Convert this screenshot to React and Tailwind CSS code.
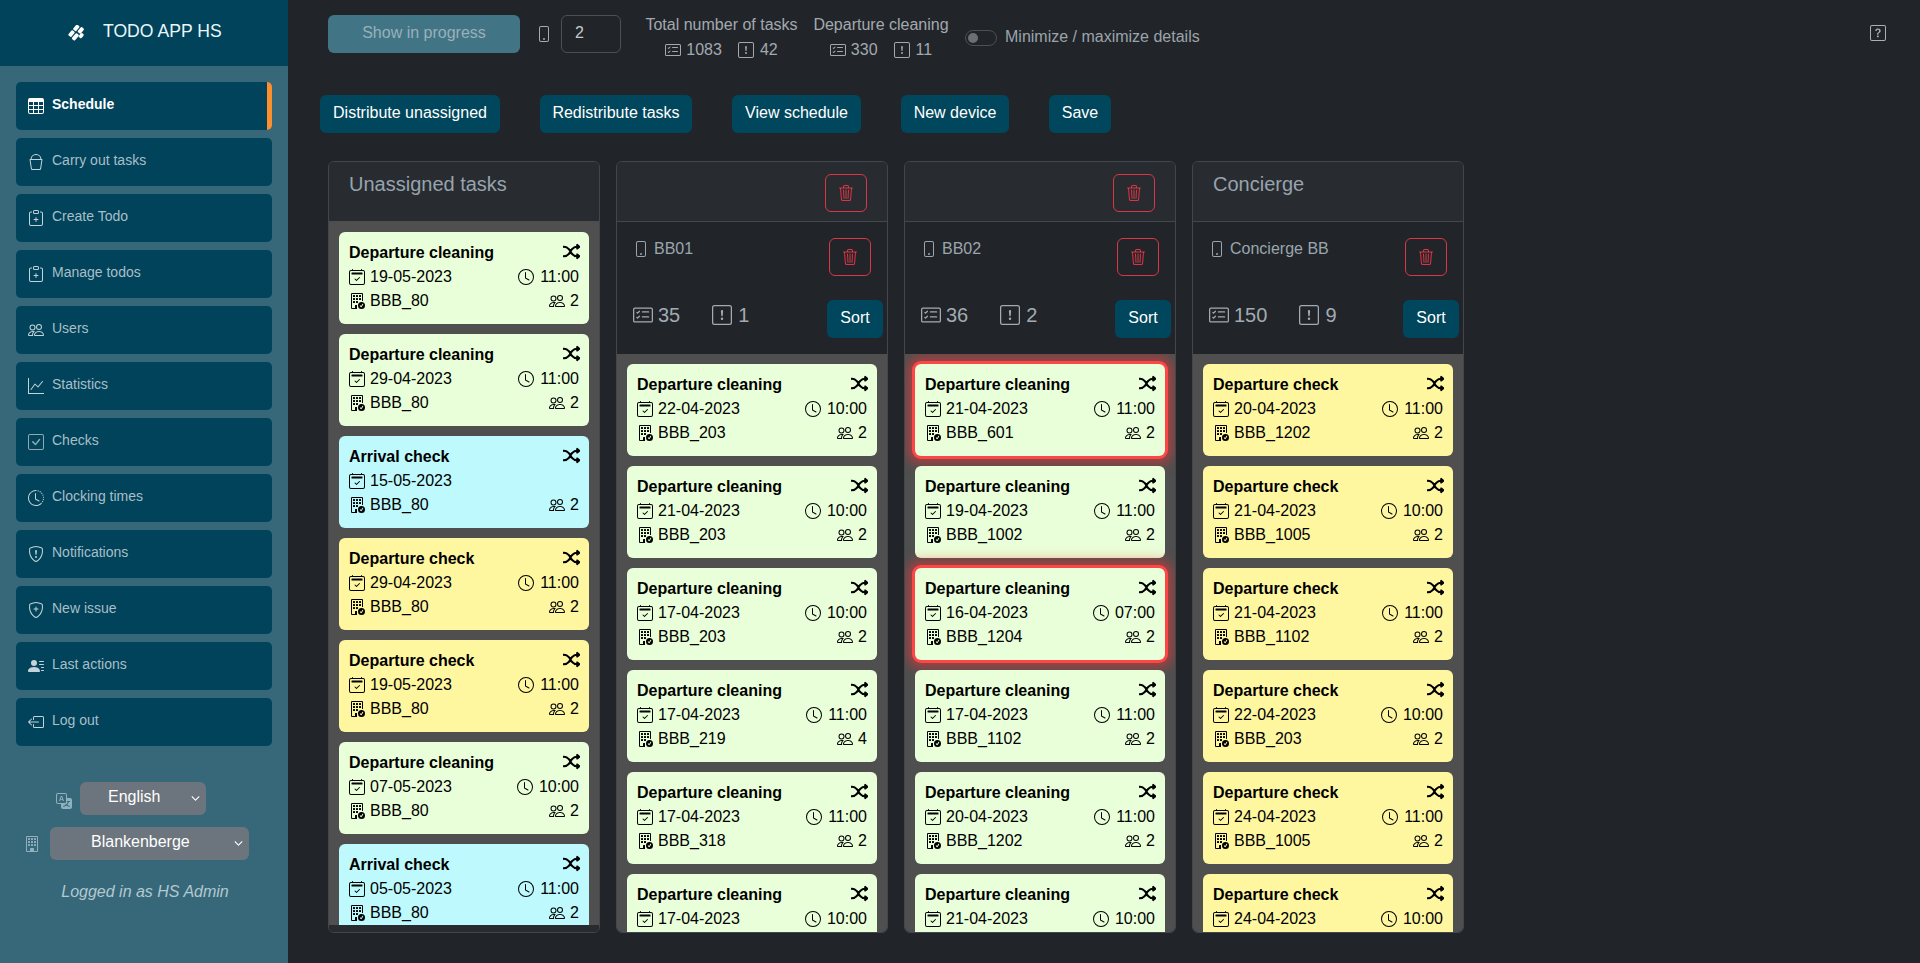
import React from 'react';
import {
  BsTable, BsBucket, BsClipboardPlus, BsPeople, BsGraphUp, BsCheckSquare, BsClockHistory,
  BsShieldExclamation, BsShieldPlus, BsPersonLinesFill, BsBoxArrowLeft, BsTranslate, BsBuilding,
  BsBuildingCheck, BsCalendar2Check, BsClock, BsShuffle, BsTrash3, BsPhone, BsCardChecklist,
  BsExclamationSquare, BsQuestionSquare, BsChevronDown,
} from 'react-icons/bs';

const nav = [
  ['Schedule', BsTable], ['Carry out tasks', BsBucket], ['Create Todo', BsClipboardPlus], ['Manage todos', BsClipboardPlus],
  ['Users', BsPeople], ['Statistics', BsGraphUp], ['Checks', BsCheckSquare], ['Clocking times', BsClockHistory],
  ['Notifications', BsShieldExclamation], ['New issue', BsShieldPlus], ['Last actions', BsPersonLinesFill], ['Log out', BsBoxArrowLeft],
];

const actions = [
  ['Distribute unassigned', 'w-[180px]'], ['Redistribute tasks', 'w-[152px]'], ['View schedule', 'w-[129px]'],
  ['New device', 'w-[108px]'], ['Save', 'w-[62px]'],
];

const DC = 'Departure cleaning';
const DK = 'Departure check';
const AC = 'Arrival check';

const unassigned = [
  [DC, '19-05-2023', '11:00', 'BBB_80', 2], [DC, '29-04-2023', '11:00', 'BBB_80', 2], [AC, '15-05-2023', '', 'BBB_80', 2],
  [DK, '29-04-2023', '11:00', 'BBB_80', 2], [DK, '19-05-2023', '11:00', 'BBB_80', 2], [DC, '07-05-2023', '10:00', 'BBB_80', 2],
  [AC, '05-05-2023', '11:00', 'BBB_80', 2],
];
const bb01 = [
  [DC, '22-04-2023', '10:00', 'BBB_203', 2], [DC, '21-04-2023', '10:00', 'BBB_203', 2], [DC, '17-04-2023', '10:00', 'BBB_203', 2],
  [DC, '17-04-2023', '11:00', 'BBB_219', 4], [DC, '17-04-2023', '11:00', 'BBB_318', 2], [DC, '17-04-2023', '10:00', 'BBB_203', 2],
];
const bb02 = [
  [DC, '21-04-2023', '11:00', 'BBB_601', 2, true], [DC, '19-04-2023', '11:00', 'BBB_1002', 2], [DC, '16-04-2023', '07:00', 'BBB_1204', 2, true],
  [DC, '17-04-2023', '11:00', 'BBB_1102', 2], [DC, '20-04-2023', '11:00', 'BBB_1202', 2], [DC, '21-04-2023', '10:00', 'BBB_1202', 2],
];
const concierge = [
  [DK, '20-04-2023', '11:00', 'BBB_1202', 2], [DK, '21-04-2023', '10:00', 'BBB_1005', 2], [DK, '21-04-2023', '11:00', 'BBB_1102', 2],
  [DK, '22-04-2023', '10:00', 'BBB_203', 2], [DK, '24-04-2023', '11:00', 'BBB_1005', 2], [DK, '24-04-2023', '10:00', 'BBB_1005', 2],
];

function bgFor(title) {
  if (title === AC) return 'bg-[#bdf9fd]';
  if (title === DK) return 'bg-[#fff6a0]';
  return 'bg-[#e9ffd9]';
}

function Task({ t }) {
  const [title, date, time, room, people, alert] = t;
  return (
    <div className={`relative w-[250px] h-[92px] shrink-0 rounded-[6px] pl-[10px] pr-[10px] pt-[9px] text-black text-base leading-6 ${bgFor(title)} ${alert ? 'shadow-[0_0_0_3px_#ff4646,0_0_12px_8px_rgba(255,50,50,0.5)]' : ''}`}>
      <div className="flex justify-between items-center h-6">
        <span className="font-bold">{title}</span>
        <BsShuffle size={17} className="stroke-1 -mt-[4px] -mr-[1px]" />
      </div>
      <div className="flex items-center h-6">
        <BsCalendar2Check size={16} className="shrink-0" />
        <span className="ml-[5px]">{date}</span>
        {time && (
          <span className="ml-auto flex items-center">
            <BsClock size={16} className="mr-[6px]" />
            {time}
          </span>
        )}
      </div>
      <div className="flex items-center h-6">
        <BsBuildingCheck size={16} className="shrink-0" />
        <span className="ml-[5px]">{room}</span>
        <span className="ml-auto flex items-center">
          <BsPeople size={16} className="mr-[5px]" />
          {people}
        </span>
      </div>
    </div>
  );
}

function TrashBtn({ className = '' }) {
  return (
    <button className={`w-[42px] h-[38px] rounded-[6px] border border-[#dc3545] text-[#dc3545] flex items-center justify-center ${className}`}>
      <BsTrash3 size={16} />
    </button>
  );
}

function DeviceSection({ name, tasks, alerts }) {
  return (
    <div className="h-[133px] shrink-0 border-t border-[#43474b] pt-4 pl-4 text-[#9aa5ae]">
      <div className="flex justify-between items-start pr-[16px]">
        <div className="flex items-center -mt-[1px] h-6">
          <BsPhone size={16} />
          <span className="ml-[5px]">{name}</span>
        </div>
        <TrashBtn />
      </div>
      <div className="flex justify-between items-start mt-6 pr-[4px]">
        <div className="flex items-center text-xl leading-[30px] text-[#a3abb2]">
          <BsCardChecklist size={20} />
          <span className="ml-[5px]">{tasks}</span>
          <BsExclamationSquare size={20} className="ml-8" />
          <span className="ml-[6px]">{alerts}</span>
        </div>
        <button className="w-[56px] h-[38px] pb-[2px] rounded-[6px] bg-[#00465c] text-white text-base">Sort</button>
      </div>
    </div>
  );
}

function Column({ title, hasTrash, device, tasks, footer }) {
  return (
    <div className="w-[272px] h-[772px] shrink-0 flex flex-col rounded-[6px] border border-[#43474b] overflow-hidden">
      <div className="h-[59px] shrink-0 bg-[#282c30] pl-5 pr-[20px] flex justify-between items-start">
        <span className="text-xl leading-[30px] text-[#97a3ae] mt-[7px]">{title}</span>
        {hasTrash && <TrashBtn className="mt-3" />}
      </div>
      {device}
      <div className={`flex-1 min-h-0 overflow-hidden bg-[#4f4f4f] px-[10px] flex flex-col gap-[10px] ${footer ? 'pt-[11px]' : 'pt-[10px]'}`}>
        {tasks.map((t, i) => <Task key={i} t={t} />)}
      </div>
      {footer && <div className="h-[7px] shrink-0 bg-[#282c30]" />}
    </div>
  );
}

function Sel({ label, className, textClass }) {
  return (
    <div className={`relative h-[33px] rounded-[6px] bg-[#6c757d] text-white text-base flex ${className}`}>
      <span className={`leading-[30px] ${textClass}`}>{label}</span>
      <BsChevronDown size={9} className="absolute right-[6px] top-[12px] stroke-[1.2px]" />
    </div>
  );
}

function Stat({ title, tasks, alerts, className = '' }) {
  return (
    <div className={`-mt-[2px] flex flex-col items-center whitespace-nowrap text-[#a3a9af] text-base leading-6 ${className}`}>
      <div>{title}</div>
      <div className="flex justify-center items-center mt-[1px]">
        <BsCardChecklist size={16} />
        <span className="ml-[5px]">{tasks}</span>
        <BsExclamationSquare size={16} className="ml-4" />
        <span className="ml-[6px]">{alerts}</span>
      </div>
    </div>
  );
}

export default function App() {
  return (
    <div className="flex h-[963px] overflow-hidden bg-[#212529] font-['Liberation_Sans',Arial,sans-serif]">
      <aside className="w-[288px] shrink-0 bg-[#366879] flex flex-col">
        <div className="h-[66px] shrink-0 bg-[#00435a] flex items-center pl-[68px] text-[17.6px] text-[#eaf6fa]">
          <svg width="18" height="18" viewBox="0 0 18 18" className="mt-[2px]">
            <g fill="#fff" transform="rotate(40 9 9)">
              <rect x="2.5" y="1.5" width="4" height="6.5" rx="1.2" />
              <rect x="7.6" y="0.5" width="4" height="6.5" rx="1.2" />
              <rect x="11.5" y="5" width="3.6" height="5" rx="1.2" />
              <rect x="2.5" y="9" width="4" height="6.5" rx="1.2" />
              <rect x="7.6" y="8.5" width="4" height="7.5" rx="1.2" />
            </g>
          </svg>
          <span className="ml-[17px] -mt-[4px]">TODO APP HS</span>
        </div>
        <nav className="mt-4 px-4 flex flex-col gap-2">
          {nav.map(([label, Icon], i) => (
            <div key={label} className={`h-[48px] rounded-[5px] bg-[#00435a] flex items-center pl-3 text-sm ${i === 0 ? 'text-white font-bold border-r-[5px] border-[#fd8f2c]' : 'text-[#a8bfc8]'}`}>
              <Icon size={16} className={`shrink-0 ${i === 0 ? '' : label === 'Checks' ? 'text-[#8fa9b3]' : 'text-[#c3d3d9]'}`} />
              <span className="ml-2 pb-[5px]">{label}</span>
            </div>
          ))}
        </nav>
        <div className="mt-9 flex items-center">
          <BsTranslate size={16} className="ml-[56px] text-[#8fb0bd] mt-[4px]" />
          <Sel label="English" className="ml-2 w-[126px] justify-start" textClass="ml-[28px]" />
        </div>
        <div className="mt-3 flex items-center">
          <BsBuilding size={16} className="ml-[24px] text-[#8fb0bd]" />
          <Sel label="Blankenberge" className="ml-[10px] w-[199px] justify-start" textClass="ml-[41px]" />
        </div>
        <div className="mt-[20px] text-center italic text-base leading-6 text-[#b3c8d0] ml-[2px]">Logged in as HS Admin</div>
      </aside>

      <main className="flex-1 min-w-0 pl-10 pt-[15px] relative">
        <div className="flex items-start h-[38px]">
          <button className="w-[192px] h-[38px] pb-[2px] rounded-[6px] bg-[#417586] text-[#9ab0b9] text-base">Show in progress</button>
          <BsPhone size={16} className="ml-4 mt-[11px] text-[#a3abb2]" />
          <div className="ml-[9px] w-[60px] h-[38px] rounded-[6px] border border-[#495057] text-[#c5c9cc] text-base leading-[34px] pl-[13px]">2</div>
          <Stat title="Total number of tasks" tasks="1083" alerts="42" className="ml-[25px] w-[151px]" />
          <Stat title="Departure cleaning" tasks="330" alerts="11" className="ml-[17px] w-[134px]" />
          <div className="ml-[17px] mt-[15px] w-[32px] h-4 rounded-full border border-[#495057] flex items-center pl-[2px]">
            <div className="w-[10px] h-[10px] rounded-full bg-[#6c6f73]" />
          </div>
          <span className="ml-2 mt-[10px] text-base leading-6 text-[#9ca4ab]">Minimize / maximize details</span>
        </div>
        <BsQuestionSquare size={16} className="absolute right-[34px] top-[25px] text-[#a9b1b8]" />
        <div className="flex gap-10 mt-[42px] -ml-2">
          {actions.map(([b, w]) => (
            <button key={b} className={`h-[38px] pb-[2px] rounded-[6px] bg-[#00465c] text-white text-base ${w}`}>{b}</button>
          ))}
        </div>
        <div className="flex gap-4 mt-[28px]">
          <Column title="Unassigned tasks" tasks={unassigned} footer />
          <Column hasTrash device={<DeviceSection name="BB01" tasks="35" alerts="1" />} tasks={bb01} />
          <Column hasTrash device={<DeviceSection name="BB02" tasks="36" alerts="2" />} tasks={bb02} />
          <Column title="Concierge" device={<DeviceSection name="Concierge BB" tasks="150" alerts="9" />} tasks={concierge} />
        </div>
      </main>
    </div>
  );
}
